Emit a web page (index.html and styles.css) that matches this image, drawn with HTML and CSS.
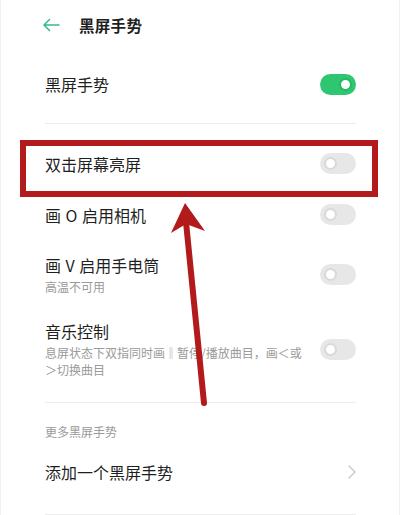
FILE: index.html
```html
<!DOCTYPE html>
<html lang="zh-CN">
<head>
<meta charset="utf-8">
<link rel="stylesheet" href="styles.css">
</head>
<body>
<div class="page">
  <header class="header">
    <svg class="back" width="18" height="14" viewBox="0 0 18 14"><path d="M17 7H2M7.5 1.5L2 7l5.5 5.5" fill="none" stroke="#36b98a" stroke-width="1.5" stroke-linecap="round" stroke-linejoin="round"/></svg>
    <h1 class="title">黑屏手势</h1>
  </header>

  <div class="row main">
    <span class="label">黑屏手势</span>
    <span class="switch on"><span class="knob"></span></span>
  </div>
  <div class="divider"></div>

  <div class="list">
    <div class="row">
      <span class="label">双击屏幕亮屏</span>
      <span class="switch"><span class="knob"></span></span>
    </div>
    <div class="row">
      <span class="label spaced">画 O 启用相机</span>
      <span class="switch"><span class="knob"></span></span>
    </div>
    <div class="row tall">
      <div class="text">
        <span class="label spaced">画 V 启用手电筒</span>
        <span class="sub">高温不可用</span>
      </div>
      <span class="switch"><span class="knob"></span></span>
    </div>
    <div class="row tall">
      <div class="text">
        <span class="label">音乐控制</span>
        <span class="sub">息屏状态下双指同时画‖暂停/播放曲目，画＜或<br>＞切换曲目</span>
      </div>
      <span class="switch"><span class="knob"></span></span>
    </div>
  </div>
  <div class="divider"></div>

  <div class="section">更多黑屏手势</div>
  <div class="row link">
    <span class="label">添加一个黑屏手势</span>
    <svg class="chev" width="8" height="14" viewBox="0 0 8 14"><path d="M1 1l6 6-6 6" fill="none" stroke="#c4c4c4" stroke-width="1.2" stroke-linecap="round" stroke-linejoin="round"/></svg>
  </div>
  <div class="divider"></div>

  <div class="highlight"></div>
  <svg class="pointer" width="400" height="515" viewBox="0 0 400 515">
    <line x1="204" y1="403" x2="186" y2="222" stroke="#b31a1c" stroke-width="6" stroke-linecap="round"/>
    <polygon points="185,203 171,233 186,224 205,231" fill="#b31a1c"/>
  </svg>
</div>
</body>
</html>
```
FILE: styles.css
```css
* { box-sizing: border-box; }
html, body { margin: 0; padding: 0; background: #fff; }
body {
  font-family: "Noto Sans CJK SC", "Noto Sans", sans-serif;
  color: #1f1f1f;
}
.page {
  position: relative;
  width: 400px;
  height: 515px;
  overflow: hidden;
  padding: 0 44px 0 45px;
  margin: 0;
  box-shadow: inset 20px 0 0 -19px #f2f2f2, inset -20px 0 0 -19px #f2f2f2;
}
.header {
  height: 50px;
  display: flex;
  align-items: center;
  margin-left: -3px;
}
.back { flex: none; }
.title {
  margin: 0 0 0 19px;
  font-size: 15.5px;
  font-weight: 700;
  letter-spacing: 0.3px;
}
.row {
  display: flex;
  align-items: center;
  justify-content: space-between;
  height: 51px;
}
.row.main { height: 68px; }
.row.tall { height: auto; padding: 14px 0 11px; }
.label {
  font-size: 16px;
  line-height: 22px;
}
.label.spaced { word-spacing: 1px; }
.text { display: flex; flex-direction: column; }
.sub {
  font-size: 12px;
  line-height: 17px;
  color: #9a9a9a;
  margin-top: 2px;
}
.divider {
  height: 1px;
  background: #ededed;
  margin-top: 5px;
}
.list { padding-top: 14px; padding-bottom: 13px; }
.list + .divider { margin-top: 0; }
.switch {
  flex: none;
  width: 36px;
  height: 21px;
  border-radius: 11px;
  background: #e7e7e7;
  display: flex;
  align-items: center;
  padding: 0 4px;
}
.knob {
  width: 13px;
  height: 13px;
  border-radius: 50%;
  background: #fff;
  border: 2px solid #d9d9d9;
}
.switch.on { background: #2ec670; justify-content: flex-end; }
.switch.on .knob { border-color: #27b864; }
.section {
  font-size: 12px;
  color: #9a9a9a;
  line-height: 17px;
  padding-top: 20px;
}
.row.link { height: 61px; padding-top: 3px; }
.row.link + .divider { margin-top: 13px; }
.highlight {
  position: absolute;
  left: 20px;
  top: 140px;
  width: 358px;
  height: 57px;
  border: 6px solid #b31a1c;
}
.pointer {
  position: absolute;
  left: 0;
  top: 0;
}
```
